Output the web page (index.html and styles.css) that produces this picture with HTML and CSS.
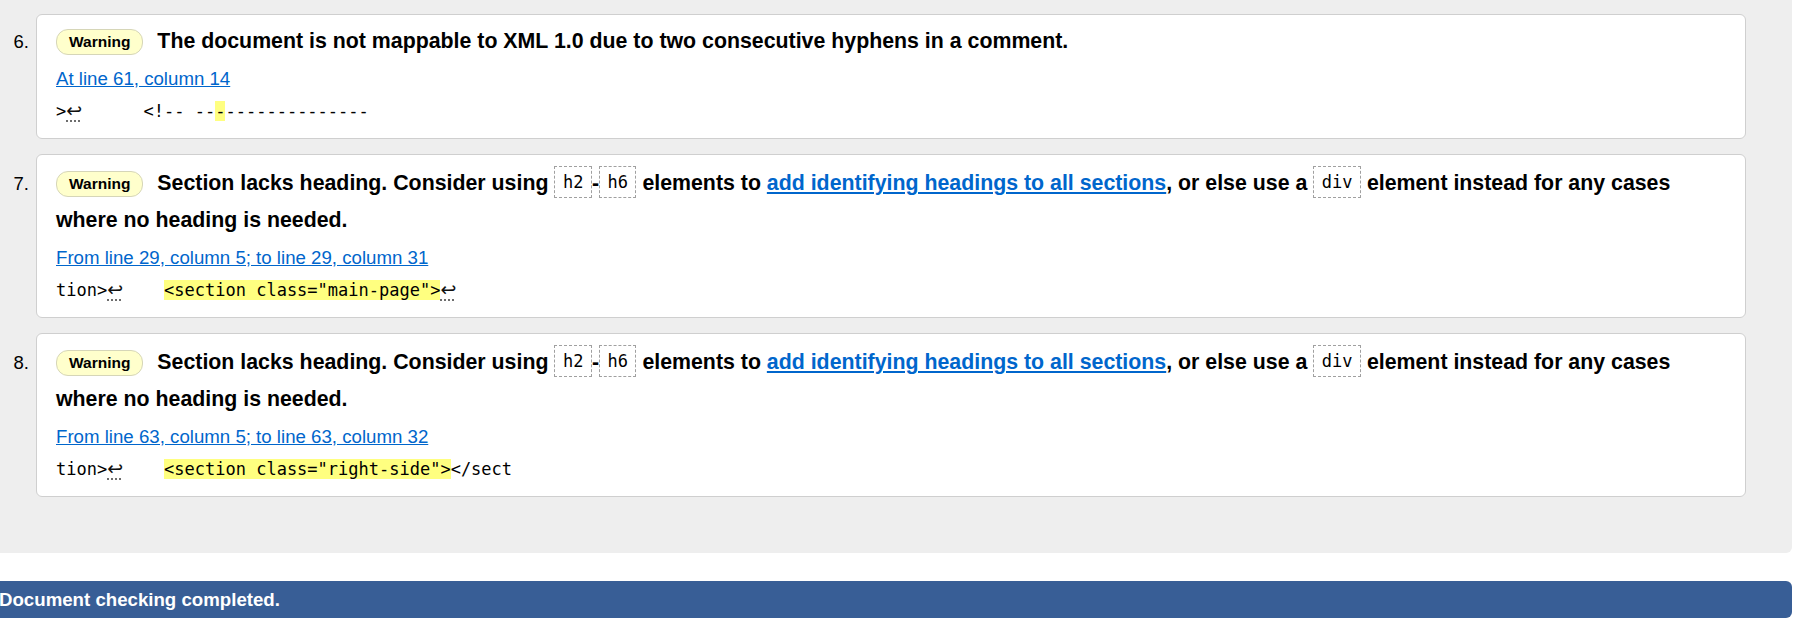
FILE: index.html
```html
<!DOCTYPE html>
<html lang="en">
<head>
<meta charset="utf-8">
<title>Validation results</title>
<link rel="stylesheet" href="styles.css">
</head>
<body>
<div class="results">
  <ol class="messages">
    <li class="msg">
      <span class="num">6.</span>
      <div class="card">
        <p class="msg-text"><span class="badge">Warning</span> The document is not mappable to XML 1.0 due to two consecutive hyphens in a comment.</p>
        <p class="location"><a href="#l61c14">At line 61, column 14</a></p>
        <p class="extract"><code>&gt;<span class="ret" title="line break">↩</span>      &lt;!-- --<mark>-</mark>--------------</code></p>
      </div>
    </li>
    <li class="msg">
      <span class="num">7.</span>
      <div class="card">
        <p class="msg-text"><span class="badge">Warning</span> Section lacks heading. Consider using <code class="tag">h2</code>-<code class="tag">h6</code> elements to <a href="#headings">add identifying headings to all sections</a>, or else use a <code class="tag">div</code> element instead for any cases where no heading is needed.</p>
        <p class="location"><a href="#l29c5">From line 29, column 5; to line 29, column 31</a></p>
        <p class="extract"><code>tion&gt;<span class="ret" title="line break">↩</span>    <mark>&lt;section class="main-page"&gt;</mark><span class="ret" title="line break">↩</span></code></p>
      </div>
    </li>
    <li class="msg">
      <span class="num">8.</span>
      <div class="card">
        <p class="msg-text"><span class="badge">Warning</span> Section lacks heading. Consider using <code class="tag">h2</code>-<code class="tag">h6</code> elements to <a href="#headings">add identifying headings to all sections</a>, or else use a <code class="tag">div</code> element instead for any cases where no heading is needed.</p>
        <p class="location"><a href="#l63c5">From line 63, column 5; to line 63, column 32</a></p>
        <p class="extract"><code>tion&gt;<span class="ret" title="line break">↩</span>    <mark>&lt;section class="right-side"&gt;</mark>&lt;/sect</code></p>
      </div>
    </li>
  </ol>
</div>
<p class="status">Document checking completed.</p>
</body>
</html>
```

FILE: styles.css
```css
html, body {
  margin: 0;
  padding: 0;
  background: #ffffff;
}

body {
  font-family: "Liberation Sans", Arial, sans-serif;
  color: #000;
  width: 1802px;
  overflow: hidden;
}

.results {
  width: 1792px;
  background: #eeeeee;
  border-radius: 0 0 6px 0;
  padding: 14px 0 56px 0;
  box-sizing: border-box;
}

.messages {
  list-style: none;
  margin: 0;
  padding: 0;
  width: 1746px;
}

.msg {
  display: flex;
  align-items: baseline;
  margin: 0 0 15px 0;
}

.msg:last-child {
  margin-bottom: 0;
}

.num {
  flex: none;
  width: 36px;
  box-sizing: border-box;
  padding-right: 7px;
  text-align: right;
  font-size: 18.5px;
}

.card {
  flex: 1;
  min-width: 0;
  background: #ffffff;
  border: 1px solid #cfcfcf;
  border-radius: 6px;
  padding: 10px 19px 16px 19px;
}

.msg:first-child .card {
  padding-top: 8px;
}

.msg-text {
  margin: 0;
  font-weight: bold;
  font-size: 21.33px;
  line-height: 37px;
}

.msg-text a {
  color: #0066cc;
  text-decoration: underline;
}

.badge {
  display: inline-block;
  font-size: 15.5px;
  font-weight: bold;
  line-height: 24px;
  padding: 0 12px;
  margin-right: 8px;
  background: #ffffcc;
  border: 1px solid #d6d6b8;
  border-radius: 12px;
  vertical-align: 1px;
}

.tag {
  display: inline-block;
  font-family: "DejaVu Sans Mono", "Liberation Mono", monospace;
  font-weight: normal;
  font-size: 17px;
  line-height: 30px;
  padding: 0 7.5px;
  border: 1px dashed #a0a0a0;
  background: #ffffff;
  vertical-align: 2px;
}

.location {
  margin: 5px 0 0 0;
  font-size: 18.67px;
  line-height: 28px;
}

.location a {
  color: #0066cc;
  text-decoration: underline;
}

.extract {
  margin: 8px 0 0 0;
  line-height: 21px;
}

.extract code {
  font-family: "DejaVu Sans Mono", "Liberation Mono", monospace;
  font-size: 17px;
  white-space: pre;
  color: #000;
}

.extract mark {
  background: #ffff80;
  color: #000;
}

.ret {
  font-family: "DejaVu Sans", sans-serif;
  font-size: 19px;
  line-height: 1;
  color: #111;
  text-decoration: underline dotted #666;
  text-underline-offset: 4px;
}

.status {
  margin: 28px 0 0 0;
  width: 1792px;
  height: 37px;
  line-height: 37px;
  background: #385e96;
  border-radius: 0 6px 6px 0;
  color: #ffffff;
  font-weight: bold;
  font-size: 18.67px;
  padding: 0;
  text-indent: -1px;
}
```
